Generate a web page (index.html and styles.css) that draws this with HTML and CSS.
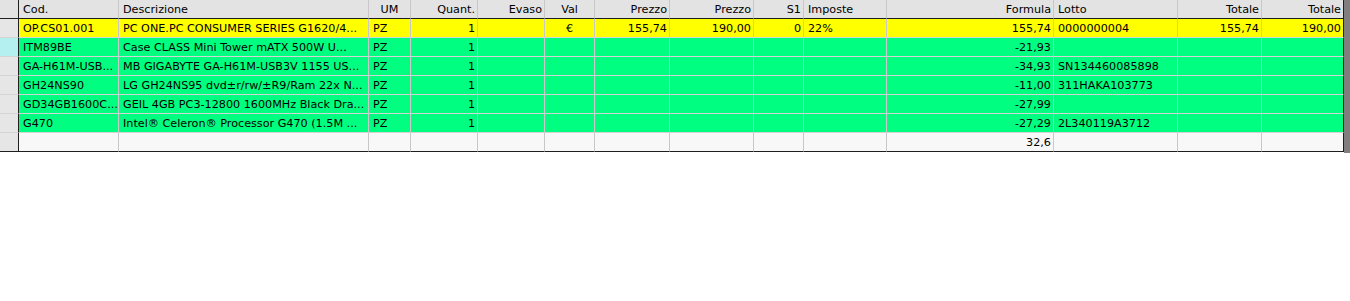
FILE: index.html
```html
<!DOCTYPE html>
<html>
<head>
<meta charset="utf-8">
<link rel="stylesheet" href="styles.css">
</head>
<body>
<div class="grid-wrap">
<table class="grid">
<colgroup>
<col class="w-rh"><col class="w-cod"><col class="w-desc"><col class="w-um"><col class="w-qt"><col class="w-ev"><col class="w-val"><col class="w-p1"><col class="w-p2"><col class="w-s1"><col class="w-imp"><col class="w-for"><col class="w-lot"><col class="w-t1"><col class="w-t2">
</colgroup>
<thead>
<tr>
<th class="rh"></th><th class="l">Cod.</th><th class="l">Descrizione</th><th class="c">UM</th><th class="r">Quant.</th><th class="r">Evaso</th><th class="c">Val</th><th class="r">Prezzo</th><th class="r">Prezzo</th><th class="r">S1</th><th class="l">Imposte</th><th class="r">Formula</th><th class="l">Lotto</th><th class="r">Totale</th><th class="r">Totale</th>
</tr>
</thead>
<tbody>
<tr class="yellow">
<td class="rh"></td><td class="l">OP.CS01.001</td><td class="l">PC ONE.PC CONSUMER SERIES G1620/4...</td><td class="l">PZ</td><td class="r">1</td><td></td><td class="c">€</td><td class="r">155,74</td><td class="r">190,00</td><td class="r">0</td><td class="l">22%</td><td class="r">155,74</td><td class="l">0000000004</td><td class="r">155,74</td><td class="r">190,00</td>
</tr>
<tr class="green">
<td class="rh sel"></td><td class="l">ITM89BE</td><td class="l">Case CLASS Mini Tower mATX 500W U...</td><td class="l">PZ</td><td class="r">1</td><td></td><td></td><td></td><td></td><td></td><td></td><td class="r">-21,93</td><td class="l"></td><td></td><td></td>
</tr>
<tr class="green">
<td class="rh"></td><td class="l">GA-H61M-USB...</td><td class="l">MB GIGABYTE GA-H61M-USB3V 1155 US...</td><td class="l">PZ</td><td class="r">1</td><td></td><td></td><td></td><td></td><td></td><td></td><td class="r">-34,93</td><td class="l">SN134460085898</td><td></td><td></td>
</tr>
<tr class="green">
<td class="rh"></td><td class="l">GH24NS90</td><td class="l">LG GH24NS95 dvd±r/rw/±R9/Ram 22x N...</td><td class="l">PZ</td><td class="r">1</td><td></td><td></td><td></td><td></td><td></td><td></td><td class="r">-11,00</td><td class="l">311HAKA103773</td><td></td><td></td>
</tr>
<tr class="green">
<td class="rh"></td><td class="l">GD34GB1600C...</td><td class="l">GEIL 4GB PC3-12800 1600MHz Black Dra...</td><td class="l">PZ</td><td class="r">1</td><td></td><td></td><td></td><td></td><td></td><td></td><td class="r">-27,99</td><td class="l"></td><td></td><td></td>
</tr>
<tr class="green">
<td class="rh"></td><td class="l">G470</td><td class="l">Intel® Celeron® Processor G470 (1.5M ...</td><td class="l">PZ</td><td class="r">1</td><td></td><td></td><td></td><td></td><td></td><td></td><td class="r">-27,29</td><td class="l">2L340119A3712</td><td></td><td></td>
</tr>
<tr class="blank">
<td class="rh"></td><td></td><td></td><td></td><td></td><td></td><td></td><td></td><td></td><td></td><td></td><td class="r">32,6</td><td></td><td></td><td></td>
</tr>
</tbody>
</table>
<div class="scrollbar"></div>
</div>
</body>
</html>
```
FILE: styles.css
```css
html, body {
  margin: 0;
  padding: 0;
  background: #ffffff;
}
.grid-wrap {
  display: flex;
  align-items: flex-start;
}
.grid {
  border-collapse: separate;
  border-spacing: 0;
  table-layout: fixed;
  width: 1344px;
  font-family: "DejaVu Sans", sans-serif;
  font-size: 11.2px;
  color: #000;
}
.w-rh { width: 19px; }
.w-cod { width: 100px; }
.w-desc { width: 250px; }
.w-um { width: 42px; }
.w-qt { width: 67px; }
.w-ev { width: 67px; }
.w-val { width: 50px; }
.w-p1 { width: 75px; }
.w-p2 { width: 84px; }
.w-s1 { width: 50px; }
.w-imp { width: 83px; }
.w-for { width: 167px; }
.w-lot { width: 124px; }
.w-t1 { width: 84px; }
.w-t2 { width: 82px; }

.grid th, .grid td {
  height: 19px;
  padding: 1px 2px 0 4px;
  box-sizing: border-box;
  border-right: 1px solid #c8c8c8;
  border-bottom: 1px solid #d4d4d4;
  white-space: nowrap;
  overflow: hidden;
  font-weight: normal;
  line-height: 17px;
}
.grid th {
  background: #e3e3e3;
  border-bottom: 1px solid #1e1e1e;
  padding-top: 0;
}
.grid th:last-child, .grid td:last-child {
  border-right: 1px solid #1e1e1e;
}
.grid .rh {
  background: #e6e6e6;
  border-right: 1px solid #1e1e1e;
  padding: 0;
}
.grid .rh.sel { background: #b4f0f0; }
.grid thead .rh { background: #e3e3e3; }
.l { text-align: left; }
.c { text-align: center; }
.r { text-align: right; }
.grid .c { padding-left: 2px; }
.grid .tight { padding-left: 3px; padding-right: 0; }

.yellow td { background: #ffff00; }
.green td { background: #00ff80; }
.blank td { background: #f8f8f8; border-bottom: 1px solid #1e1e1e; }
.blank td.rh { background: #e6e6e6; }

.scrollbar {
  width: 6px;
  height: 153px;
  background: #7f7f7f;
}
```
